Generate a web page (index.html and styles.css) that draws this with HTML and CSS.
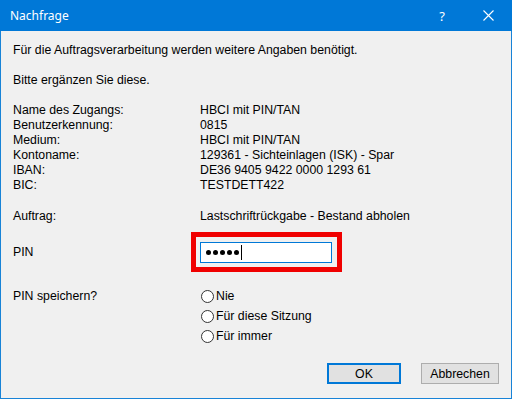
FILE: index.html
```html
<!DOCTYPE html>
<html lang="de">

<head>
    <meta charset="UTF-8">
    <title>Nachfrage</title>
    <link rel="stylesheet" href="styles.css">
</head>

<body>
    <div class="window">
        <!-- Title bar -->
        <div class="titlebar">
            <span class="title">Nachfrage</span>
            <span class="help">?</span>
            <span class="close">
                <svg width="11" height="11" viewBox="0 0 11 11">
                    <path d="M0.5 0.5 L10.5 10.5 M10.5 0.5 L0.5 10.5" stroke="#fff" stroke-width="1.1" fill="none"/>
                </svg>
            </span>
        </div>

        <div class="content">
            <p class="line">Für die Auftragsverarbeitung werden weitere Angaben benötigt.</p>
            <p class="line">Bitte ergänzen Sie diese.</p>

            <div class="details">
                <div>Name des Zugangs:</div><div>HBCI mit PIN/TAN</div>
                <div>Benutzerkennung:</div><div>0815</div>
                <div>Medium:</div><div>HBCI mit PIN/TAN</div>
                <div>Kontoname:</div><div>129361 - Sichteinlagen (ISK) - Spar</div>
                <div>IBAN:</div><div>DE36 9405 9422 0000 1293 61</div>
                <div>BIC:</div><div>TESTDETT422</div>
            </div>

            <div class="details order">
                <div>Auftrag:</div><div>Lastschriftrückgabe - Bestand abholen</div>
            </div>

            <div class="pin-row">
                <div class="label">PIN</div>
                <div class="highlight">
                    <div class="pin-input">
                        <span class="dot"></span><span class="dot"></span><span class="dot"></span><span class="dot"></span><span class="dot"></span><span class="caret"></span>
                    </div>
                </div>
            </div>

            <div class="save-row">
                <div class="label">PIN speichern?</div>
                <div class="radios">
                    <label class="radio"><span class="circle"></span>Nie</label>
                    <label class="radio"><span class="circle"></span>Für diese Sitzung</label>
                    <label class="radio"><span class="circle"></span>Für immer</label>
                </div>
            </div>
        </div>

        <div class="buttons">
            <button class="btn btn-default">OK</button>
            <button class="btn">Abbrechen</button>
        </div>
    </div>
</body>

</html>
```

FILE: styles.css
```css
body {
    margin: 0;
    font-family: "Liberation Sans", Arial, sans-serif;
    font-size: 12.3px;
    color: #000;
}

.window {
    width: 512px;
    height: 399px;
    box-sizing: border-box;
    border: 1px solid #1883d7;
    border-top: none;
    background-color: #f0f0f0;
    display: flex;
    flex-direction: column;
}

.titlebar {
    height: 31px;
    margin: 0 -1px;
    background-color: #0078d7;
    color: #fff;
    display: flex;
    align-items: center;
    font-family: "Noto Sans", "Open Sans", sans-serif;
    font-size: 12px;
}

.title {
    padding-left: 10px;
    flex: 1;
}

.help {
    width: 46px;
    text-align: center;
    font-size: 13px;
}

.close {
    width: 46px;
    display: flex;
    justify-content: center;
    margin-right: 1px;
}

.content {
    padding: 12px 12px 0 12px;
    line-height: 15px;
}

.line {
    margin: 0 0 15px 0;
}

.details {
    display: grid;
    grid-template-columns: 187px auto;
}

.order {
    margin-top: 16px;
}

.pin-row {
    display: flex;
    align-items: center;
    margin-top: 8px;
}

.pin-row .label {
    width: 178px;
}

.highlight {
    border: 5px solid #f00000;
    padding: 5px 5px 4px 4px;
}

.pin-input {
    width: 125px;
    height: 19px;
    background-color: #fff;
    border: 1px solid #0078d7;
    display: flex;
    align-items: center;
    padding-left: 5px;
    box-sizing: content-box;
}

.dot {
    width: 5px;
    height: 5px;
    border-radius: 50%;
    background-color: #000;
    margin-right: 2px;
}

.caret {
    width: 1px;
    height: 15px;
    background-color: #000;
}

.save-row {
    display: flex;
    align-items: flex-start;
    margin-top: 14px;
    line-height: 20px;
}

.save-row .label {
    width: 188px;
}

.radios {
    display: flex;
    flex-direction: column;
}

.radio {
    display: flex;
    align-items: center;
    height: 20px;
}

.circle {
    width: 11px;
    height: 11px;
    border: 1px solid #333;
    border-radius: 50%;
    background-color: #fff;
    margin-right: 2px;
}

.buttons {
    margin-top: auto;
    display: flex;
    justify-content: flex-end;
    gap: 20px;
    padding: 0 12px 14px 0;
}

.btn {
    height: 21px;
    width: 78px;
    font-family: "Liberation Sans", Arial, sans-serif;
    font-size: 12.3px;
    color: #000;
    background-color: #e1e1e1;
    border: 1px solid #adadad;
    padding: 0;
}

.btn-default {
    width: 74px;
    border: 2px solid #0078d7;
}
```
